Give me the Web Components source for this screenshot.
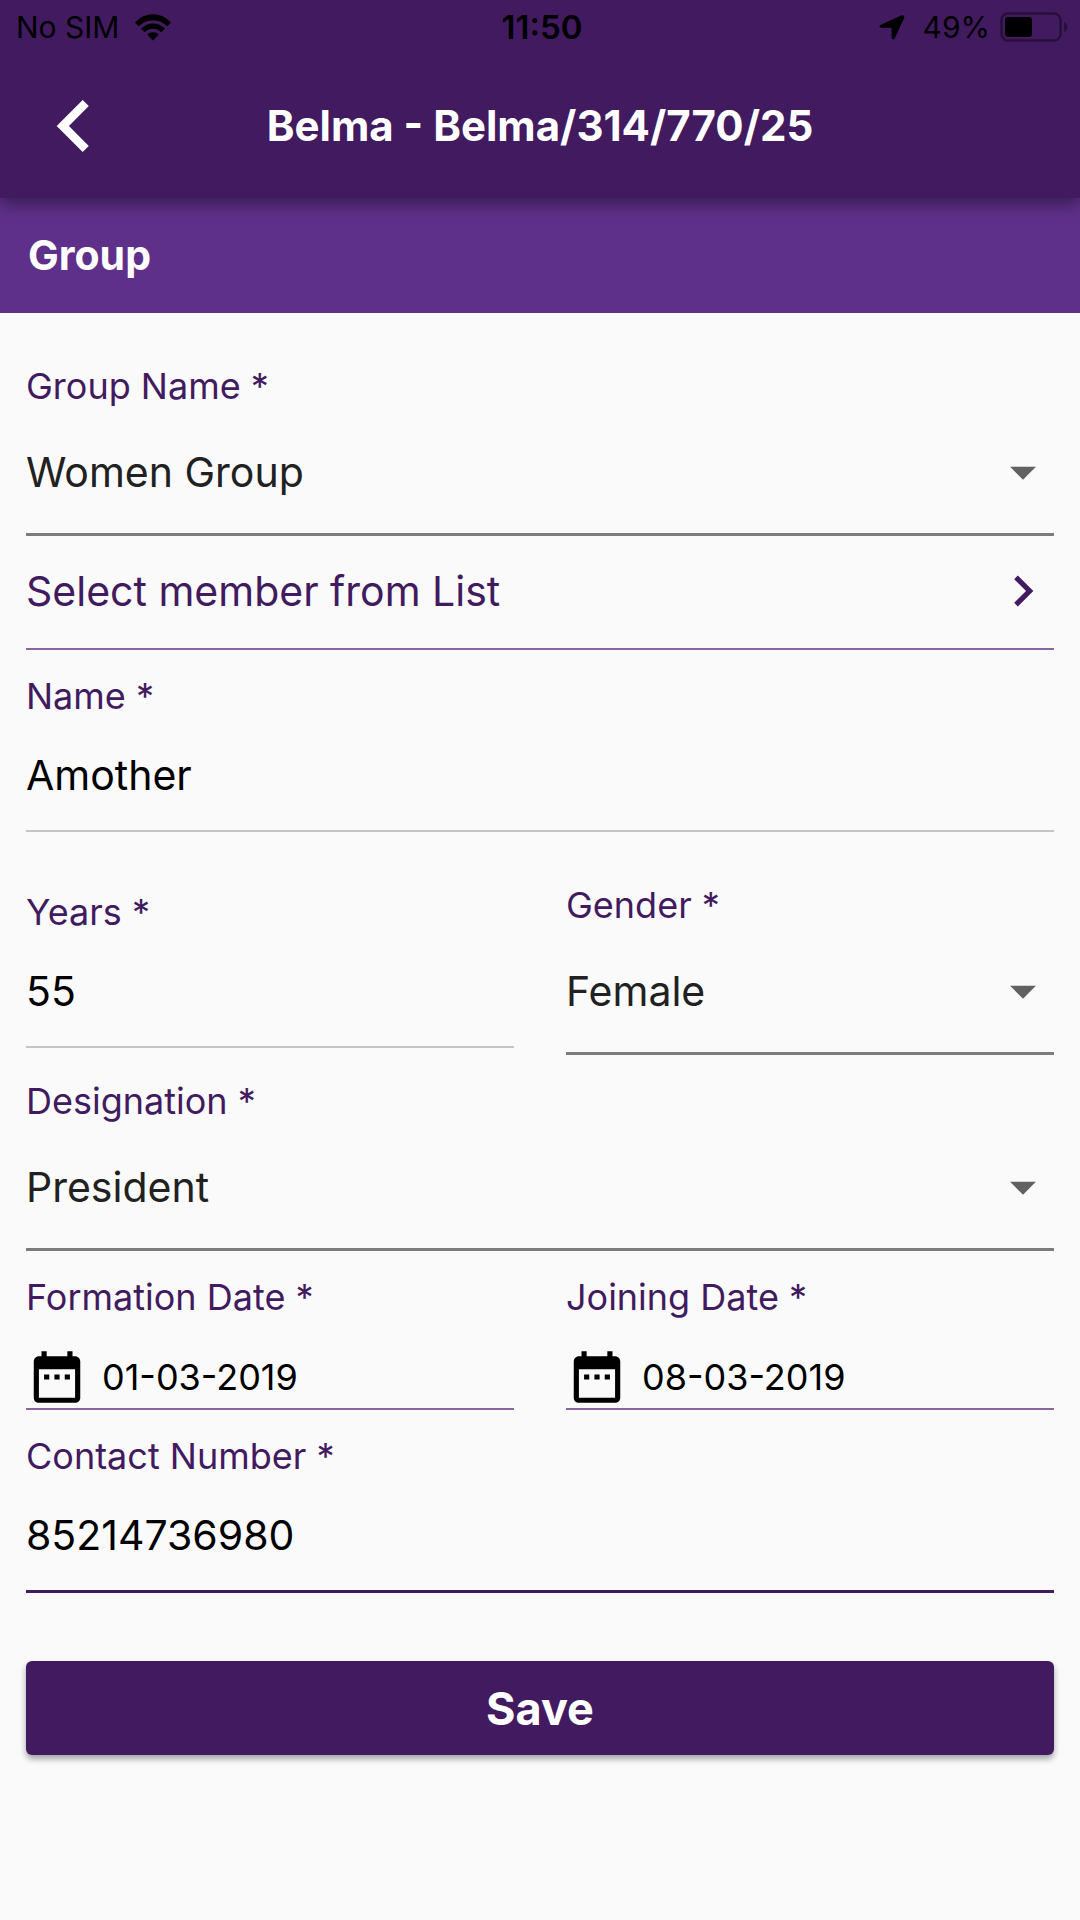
<!DOCTYPE html>
<html lang="en">
<head>
<meta charset="utf-8">
<meta name="viewport" content="width=device-width, initial-scale=1">
<title>Belma - Group</title>
<style>
  :root {
    --primary: #421a60;
    --accent: #5f308a;
    --line: #7c7c7c;
    --line-soft: #c4c4c4;
    --line-tint: #8765a3;
  }
  html { background: #fafafa; }
  body { margin: 0; font-family: Inter, "Liberation Sans", sans-serif; color: #000; }
  form { display: flex; flex-direction: column; padding: 51px 26px; }
  .stack { display: flex; flex-direction: column; gap: 24px; }
  .columns { display: grid; grid-template-columns: 1fr 1fr; column-gap: 52px; align-items: center; }
  .apart { margin-top: 27px; }
  save-button { margin-top: 68px; }
</style>
</head>
<body>
<app-header heading="Belma - Belma/314/770/25">
  <status-bar carrier="No SIM" time="11:50" battery="49"></status-bar>
</app-header>
<main>
  <section-band>Group</section-band>
  <form>
    <select-field label="Group Name *" value="Women Group"></select-field>
    <div class="stack">
      <list-link>Select member from List</list-link>
      <text-field label="Name *" value="Amother"></text-field>
      <div class="columns apart">
        <text-field label="Years *" value="55" mode="numeric"></text-field>
        <select-field label="Gender *" value="Female"></select-field>
      </div>
      <select-field label="Designation *" value="President"></select-field>
      <div class="columns">
        <date-field label="Formation Date *" value="01-03-2019"></date-field>
        <date-field label="Joining Date *" value="08-03-2019"></date-field>
      </div>
      <text-field label="Contact Number *" value="85214736980" mode="tel" active></text-field>
    </div>
    <save-button>Save</save-button>
  </form>
</main>

<script>
const shared = `
  *, *::before { box-sizing: border-box; }
  :host { display: block; min-width: 0; }
  svg { display: block; flex: none; }
  label { display: block; font-size: 36px; line-height: 44px; margin-bottom: 2px; color: var(--primary); white-space: nowrap; }
  input, select, button { font: inherit; color: inherit; margin: 0; padding: 0; border: 0; border-radius: 0; background: none; outline: none; width: 100%; min-width: 0; }
`;

class Base extends HTMLElement {
  connectedCallback() {
    if (this.shadowRoot) return;
    this.attachShadow({ mode: 'open' }).innerHTML = `<style>${shared}${this.css()}</style>${this.html()}`;
  }
  attr(name) { return this.getAttribute(name) || ''; }
}

customElements.define('status-bar', class extends Base {
  css() { return `
    :host { color: #000; font-size: 30px; line-height: 54px; }
    .bar { display: grid; grid-template-columns: 1fr auto 1fr; padding: 0 12px 0 16px; height: 54px; }
    .side { display: flex; align-items: center; }
    .left { gap: 16px; }
    .right { justify-content: flex-end; }
    .time { font-size: 33px; font-weight: 600; }
    .pct { margin: 0 10px 0 18px; }
  `; }
  html() { return `
    <div class="bar">
      <div class="side left"><span>${this.attr('carrier')}</span>
        <svg width="36" height="27" viewBox="0 0 36 27" aria-hidden="true">
          <path d="M0 8.6C10-2.6 26-2.6 36 8.6L32.3 12.3C24.5 4.2 11.500 4.200 3.700 12.300Z"/>
          <path d="M6 14.600C12.600 7.700 23.400 7.700 30 14.600L26.300 18.200C21.500 13.600 14.500 13.600 9.700 18.200Z"/>
          <path d="M12.200 20.500C15.600 17.500 20.400 17.500 23.800 20.500L18.700 26.100Q18 26.900 17.300 26.100Z"/>
        </svg>
      </div>
      <span class="time">${this.attr('time')}</span>
      <div class="side right">
        <svg width="26" height="25" viewBox="0 0 26 25" aria-hidden="true"><path d="M1.500 10 22.300.5Q25.800-.3 25.200 3L15.800 23.200Q14 26 12.600 23V13.600Q12.500 12.800 11.700 12.700H2Q-.8 12 1.500 10Z"/></svg>
        <span class="pct">${this.attr('battery')}%</span>
        <svg width="68" height="30" viewBox="0 0 68 30" aria-hidden="true">
          <rect x="1.500" y="1.500" width="59" height="27" rx="6.500" fill="none" stroke="#000" stroke-opacity=".4" stroke-width="2.400"/>
          <rect x="5" y="5" width="27" height="20" rx="3"/>
          <path d="M64 10Q67.500 12 67.500 15T64 20Z" fill-opacity=".4"/>
        </svg>
      </div>
    </div>`; }
});

customElements.define('app-header', class extends Base {
  css() { return `
    :host { position: relative; z-index: 1; background: var(--primary); box-shadow: 0 6px 16px rgba(0,0,0,.42); }
    nav { display: grid; grid-template-columns: 104px 1fr 104px; align-items: center; height: 144px; padding: 0 22px; }
    h1 { margin: 0; font-size: 42px; line-height: 56px; font-weight: 700; color: #fff; text-align: center; white-space: nowrap; }
    button { color: #fff; }
  `; }
  html() { return `
    <slot></slot>
    <nav>
      <button type="button" aria-label="Back"><svg width="104" height="104" viewBox="0 0 24 24" fill="currentColor"><path d="M15.410 7.410 14 6l-6 6 6 6 1.410-1.410L10.830 12z"/></svg></button>
      <h1>${this.attr('heading')}</h1>
    </nav>`; }
});

customElements.define('section-band', class extends Base {
  css() { return `
    :host { background: var(--accent); }
    h2 { margin: 0; padding: 28px; font-size: 41px; line-height: 59px; font-weight: 700; color: #fff; }
  `; }
  html() { return `<h2><slot></slot></h2>`; }
});

customElements.define('select-field', class extends Base {
  css() { return `
    .box { display: grid; align-items: center; border-bottom: 3px solid var(--line); }
    select, svg { grid-area: 1 / 1; }
    select { appearance: none; height: 123px; font-size: 41px; color: #212121; }
    svg { justify-self: end; fill: #616161; pointer-events: none; }
  `; }
  html() { return `
    <label for="control">${this.attr('label')}</label>
    <div class="box">
      <select id="control"><option>${this.attr('value')}</option></select>
      <svg width="62" height="62" viewBox="0 0 24 24" aria-hidden="true"><path d="M7 10l5 5 5-5z"/></svg>
    </div>`; }
});

customElements.define('text-field', class extends Base {
  css() { return `
    input { display: block; height: 112px; font-size: 41px; border-bottom: 2px solid var(--line-soft); }
    :host([active]) input { height: 113px; border-bottom: 3px solid var(--primary); }
  `; }
  html() { return `
    <label for="control">${this.attr('label')}</label>
    <input id="control" type="text" inputmode="${this.attr('mode') || 'text'}" value="${this.attr('value')}">`; }
});

customElements.define('date-field', class extends Base {
  css() { return `
    .box { display: flex; align-items: center; gap: 14px; margin-top: 27px; border-bottom: 2px solid var(--line-tint); }
    input { height: 62px; font-size: 36px; }
  `; }
  html() { return `
    <label for="control">${this.attr('label')}</label>
    <div class="box">
      <svg width="62" height="62" viewBox="0 0 24 24" aria-hidden="true"><path d="M9 11H7v2h2v-2zm4 0h-2v2h2v-2zm4 0h-2v2h2v-2zm2-7h-1V2h-2v2H8V2H6v2H5c-1.110 0-1.990.9-1.990 2L3 20c0 1.100.89 2 2 2h14c1.100 0 2-.9 2-2V6c0-1.100-.9-2-2-2zm0 16H5V9h14v11z"/></svg>
      <input id="control" type="text" inputmode="numeric" value="${this.attr('value')}">
    </div>`; }
});

customElements.define('list-link', class extends Base {
  css() { return `
    button { display: flex; align-items: center; justify-content: space-between; height: 114px; padding-bottom: 2px; border-bottom: 2px solid var(--line-tint); font-size: 41px; color: var(--primary); text-align: left; }
  `; }
  html() { return `
    <button type="button"><span><slot></slot></span>
      <svg width="62" height="62" viewBox="0 0 24 24" fill="currentColor" aria-hidden="true"><path d="M10 6L8.590 7.410 13.170 12l-4.580 4.590L10 18l6-6z"/></svg>
    </button>`; }
});

customElements.define('save-button', class extends Base {
  css() { return `
    button { display: block; height: 94px; border-radius: 6px; background: var(--primary); color: #fff; font-size: 45px; font-weight: 700; box-shadow: 0 4px 6px rgba(0,0,0,.35); }
  `; }
  html() { return `<button type="button"><slot></slot></button>`; }
});
</script>
</body>
</html>
